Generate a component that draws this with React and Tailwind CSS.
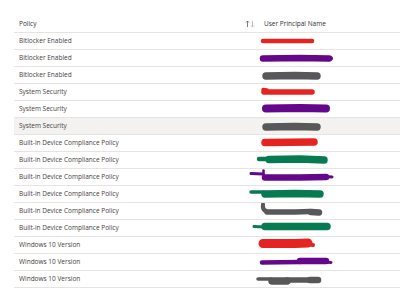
import React from 'react';

const RED = '#e52421';
const PURPLE = '#64078a';
const GRAY = '#58585a';
const GREEN = '#087a52';

// redaction marks per row: [path, stroke width]
const rows = [
  { policy: 'Bitlocker Enabled', color: RED, strokes: [['M23 8 L72 8', 4.5]] },
  { policy: 'Bitlocker Enabled', color: PURPLE, strokes: [['M23 8.5 L60 8 L89 8.5', 6.5], ['M86 8 L91 8.3', 4]] },
  { policy: 'Bitlocker Enabled', color: GRAY, strokes: [['M26 9 L55 8.5 L77 9', 7.5]] },
  { policy: 'System Security', color: RED, strokes: [['M24 8 L72 8', 5.5], ['M23 5.5 L27 6', 3.5]] },
  { policy: 'System Security', color: PURPLE, strokes: [['M26 7.5 L60 7 L86 7.5', 8]] },
  { policy: 'System Security', color: GRAY, strokes: [['M26 9 L55 8.5 L77 9', 7.5]], highlight: true },
  { policy: 'Built-in Device Compliance Policy', color: RED, strokes: [['M25 7.5 L74 7', 7.5]] },
  { policy: 'Built-in Device Compliance Policy', color: GREEN, strokes: [['M19 7 L30 7', 4.5], ['M29 7.5 L60 7 L84 8', 7.5]] },
  { policy: 'Built-in Device Compliance Policy', color: PURPLE, strokes: [['M11 4.5 L23 5', 3], ['M23.5 1.5 L23.5 7', 2.5], ['M25 8.5 L60 8.5 L86 8', 6.5], ['M85 7.5 L92 8', 3]] },
  { policy: 'Built-in Device Compliance Policy', color: GREEN, strokes: [['M11 6 L24 6', 3.5], ['M25 8 L55 7.5 L80 8', 7.5]] },
  { policy: 'Built-in Device Compliance Policy', color: GRAY, strokes: [['M23 1.5 Q22 7 27 8.5', 4], ['M27 9 L55 9 L70 8.5', 5.5], ['M71 9 L79 9.5', 6.5]] },
  { policy: 'Built-in Device Compliance Policy', color: GREEN, strokes: [['M14 6.5 L24 7', 3], ['M25 6.5 L60 6.5 L87 6.5', 7.5]] },
  { policy: 'Windows 10 Version', color: RED, strokes: [['M23 6.5 L55 6.5 L68 6', 9], ['M68 7 L73 8', 4]] },
  { policy: 'Windows 10 Version', color: PURPLE, strokes: [['M22 8.5 L60 8', 4.5], ['M60 7 L86 7', 6.5], ['M85 8 L91 8.5', 3]] },
  { policy: 'Windows 10 Version', color: GRAY, strokes: [['M18 8 L31 8', 3.5], ['M32 10 L47 10', 7.5], ['M47 9 L70 9', 5.5], ['M70 9 L78 9', 6.5]] },
];

const Scribble = ({ color, strokes }) => (
  <svg width="100" height="16" viewBox="0 0 100 16" className="block">
    {strokes.map(([d, w], i) => (
      <path key={i} d={d} fill="none" stroke={color} strokeWidth={w} strokeLinecap="round" strokeLinejoin="round" />
    ))}
  </svg>
);

const SortArrows = () => (
  <svg width="10" height="8" viewBox="0 0 10 8" className="block">
    <path d="M2.5 7 L2.5 1 M1 2.5 L2.5 1 L4 2.5" fill="none" stroke="#605e5c" strokeWidth="0.8" />
    <path d="M7.5 1 L7.5 7 M6 5.5 L7.5 7 L9 5.5" fill="none" stroke="#b3b0ad" strokeWidth="0.8" />
  </svg>
);

export default function App() {
  return (
    <div className="w-[400px] h-[301px] bg-white pt-[16px] pl-[14px] overflow-hidden font-['Open_Sans',sans-serif]">
      {/* Header */}
      <div className="grid grid-cols-[226px_1fr] h-[17px] border-b border-[#e6e4e2] items-center text-[6.5px] text-[#323130]">
        <div className="pl-[5px]">Policy</div>
        <div className="flex items-center pl-[5px] gap-[9px]">
          <SortArrows />
          <span>User Principal Name</span>
        </div>
      </div>

      {/* Rows */}
      {rows.map((row, i) => (
        <div
          key={i}
          className={`grid grid-cols-[226px_1fr] h-[17px] border-b border-[#e6e4e2] items-center text-[6.5px] text-[#3f3e3d] ${row.highlight ? 'bg-[#f3f2f1]' : ''}`}
        >
          <div className="pl-[5px] whitespace-nowrap">{row.policy}</div>
          <div>
            <Scribble color={row.color} strokes={row.strokes} />
          </div>
        </div>
      ))}
    </div>
  );
}
